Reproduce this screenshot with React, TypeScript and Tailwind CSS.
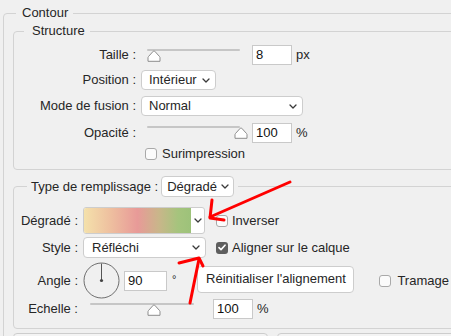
const FONT = "font-['Liberation_Sans','Helvetica',sans-serif]";

function Chevron() {
  return (
    <svg width="8" height="5" viewBox="0 0 8 5" className="shrink-0">
      <path d="M1 1l3 3 3-3" fill="none" stroke="#3a3a3a" strokeWidth="1.3" strokeLinecap="round" strokeLinejoin="round" />
    </svg>
  );
}

function Select({ label, className }: { label: string; className: string }) {
  return (
    <div className={`flex shrink-0 items-center justify-between rounded-[4px] border border-[#cdcdcd] bg-white ${className}`}>
      <span className="whitespace-nowrap">{label}</span>
      <Chevron />
    </div>
  );
}

function NumInput({ value, className }: { value: string; className: string }) {
  return (
    <div className={`flex h-[20px] shrink-0 items-center border border-[#c9c9c9] bg-white pl-[3px] text-[#111] ${className}`}>
      {value}
    </div>
  );
}

function Thumb() {
  return (
    <svg width="14" height="12" viewBox="0 0 14 12">
      <path
        d="M1 11.3V7.6Q1 7 1.5 6.5L6.3 1.2Q7 0.5 7.7 1.2L12.5 6.5Q13 7 13 7.6V11.3Z"
        fill="#fff"
        stroke="#8d8d8d"
        strokeWidth="1"
        strokeLinejoin="round"
      />
    </svg>
  );
}

function Slider({ width, thumb }: { width: number; thumb: number }) {
  return (
    <div className="relative h-[13px] shrink-0" style={{ width }}>
      <div className="h-[2px] rounded-full bg-[#c6c6c6]" />
      <div className="absolute top-[1px]" style={{ left: thumb }}>
        <Thumb />
      </div>
    </div>
  );
}

function Checkbox({ checked = false }: { checked?: boolean }) {
  if (checked) {
    return (
      <div className="flex h-[12px] w-[12px] shrink-0 items-center justify-center rounded-[3px] bg-[#5e5e5e]">
        <svg width="8" height="7" viewBox="0 0 8 7">
          <path d="M1 3.6l2 2L7 1.2" fill="none" stroke="#fff" strokeWidth="1.6" strokeLinecap="round" strokeLinejoin="round" />
        </svg>
      </div>
    );
  }
  return <div className="h-[12px] w-[12px] shrink-0 rounded-[3px] border border-[#a9a9a9] bg-[#fbfbfb]" />;
}

function Dial() {
  return (
    <svg width="37" height="37" viewBox="0 0 37 37" className="shrink-0">
      <circle cx="18.5" cy="18.5" r="17.5" fill="none" stroke="#6e6e6e" strokeWidth="1" />
      <line x1="18.5" y1="1.5" x2="18.5" y2="18.5" stroke="#555" strokeWidth="1" />
      <circle cx="18.5" cy="18.5" r="1.6" fill="#444" />
    </svg>
  );
}

export default function App() {
  return (
    <div className={`relative h-[336px] w-[451px] overflow-hidden bg-[#f0f0f0] pt-[5px] text-[13px] leading-4 text-[#262626] ${FONT}`}>
      <fieldset className="ml-[3px] w-[470px] rounded-[4px] border border-[#d3d3d3] pb-[30px]">
        <legend className="ml-[12px] pl-[6px] pr-[5px] leading-4">Contour</legend>

        {/* Structure */}
        <fieldset className="ml-[9px] mt-[2px] w-[455px] rounded-[4px] border border-[#d3d3d3] pb-[7px]">
          <legend className="ml-[10px] pl-[8px] pr-[5px] leading-4">Structure</legend>

          <div className="mt-[6px] flex h-[20px] items-center">
            <span className="w-[122px] text-right">Taille :</span>
            <div className="ml-[11px]">
              <Slider width={93} thumb={0} />
            </div>
            <NumInput value="8" className="ml-[12px] w-[40px]" />
            <span className="ml-[4px]">px</span>
          </div>

          <div className="mt-[5px] flex h-[20px] items-center">
            <span className="w-[122px] text-right">Position :</span>
            <Select label="Intérieur" className="ml-[5px] h-[20px] w-[75px] pl-[7px] pr-[5px]" />
          </div>

          <div className="mt-[6px] flex h-[20px] items-center">
            <span className="w-[122px] text-right">Mode de fusion :</span>
            <Select label="Normal" className="ml-[5px] h-[20px] w-[162px] pl-[7px] pr-[5px]" />
          </div>

          <div className="mt-[7px] flex h-[20px] items-center">
            <span className="w-[122px] text-right">Opacité :</span>
            <div className="ml-[11px] -mt-[2px]">
              <Slider width={93} thumb={87} />
            </div>
            <NumInput value="100" className="ml-[12px] w-[40px]" />
            <span className="ml-[4px]">%</span>
          </div>

          <div className="mt-[3px] flex h-[16px] items-center">
            <div className="ml-[131px]">
              <Checkbox />
            </div>
            <span className="ml-[5px]">Surimpression</span>
          </div>
        </fieldset>

        {/* Type de remplissage */}
        <fieldset className="ml-[9px] mt-[6px] w-[455px] rounded-[4px] border border-[#d3d3d3] pb-[9px]">
          <legend className="ml-[13px] pl-[4px] pr-[4px]">
            <div className="flex items-center">
              <span className="shrink-0 whitespace-nowrap">Type de remplissage :</span>
              <Select label="Dégradé" className="ml-[3px] h-[21px] w-[73px] pl-[5px] pr-[4px]" />
            </div>
          </legend>

          <div className="mt-[10px] flex h-[27px] items-center">
            <span className="w-[64px] text-right">Dégradé :</span>
            <div className="ml-[5px] flex h-[27px] w-[122px] overflow-hidden rounded-[3px] border border-[#cdcdcd] bg-white">
              <div className="flex-1 bg-[linear-gradient(to_right,#f4e1ab_0%,#eebf9f_25%,#e89a98_50%,#c9b68a_70%,#a5c47d_88%,#9dc27a_100%)]" />
              <div className="flex w-[13px] items-center justify-center">
                <Chevron />
              </div>
            </div>
            <div className="ml-[11px]">
              <Checkbox />
            </div>
            <span className="ml-[4px]">Inverser</span>
          </div>

          <div className="mt-[3px] flex h-[21px] items-center">
            <span className="w-[64px] text-right">Style :</span>
            <Select label="Réfléchi" className="ml-[5px] h-[21px] w-[123px] pl-[8px] pr-[5px]" />
            <div className="ml-[10px]">
              <Checkbox checked />
            </div>
            <span className="ml-[4px]">Aligner sur le calque</span>
          </div>

          <div className="mt-[4px] flex h-[37px] items-center">
            <span className="w-[64px] text-right">Angle :</span>
            <div className="ml-[5px]">
              <Dial />
            </div>
            <NumInput value="90" className="ml-[4px] w-[43px]" />
            <span className="ml-[5px] -mt-[3px] text-[11px]">°</span>
            <div className="ml-[21px] -mt-[3px] flex h-[27px] w-[157px] shrink-0 items-center justify-center rounded-[4px] border border-[#cdcdcd] bg-white">
              Réinitialiser l'alignement
            </div>
            <div className="ml-[25px]">
              <Checkbox />
            </div>
            <span className="ml-[6px]">Tramage</span>
          </div>

          <div className="flex h-[20px] items-center">
            <span className="w-[64px] text-right">Echelle :</span>
            <div className="ml-[12px] mt-[1px]">
              <Slider width={104} thumb={57} />
            </div>
            <NumInput value="100" className="ml-[19px] w-[40px]" />
            <span className="ml-[4px]">%</span>
          </div>
        </fieldset>

        <div className="mt-[4px] flex">
          <div className="ml-[9px] h-[24px] w-[255px] rounded-[4px] border border-[#cdcdcd] bg-[#f4f4f4]" />
          <div className="ml-[9px] h-[24px] w-[200px] rounded-[4px] border border-[#cdcdcd] bg-[#f4f4f4]" />
        </div>
      </fieldset>

      {/* red annotation arrows */}
      <svg className="pointer-events-none absolute left-0 top-0" width="451" height="336" viewBox="0 0 451 336">
        <g fill="none" stroke="#ff0000" strokeWidth="3" strokeLinecap="round" strokeLinejoin="round">
          <path d="M290 182L210 217" />
          <path d="M212 200L210 218L224 220" />
          <path d="M190 303L199 259" />
          <path d="M179 263L199 258L203 266" />
        </g>
      </svg>
    </div>
  );
}
